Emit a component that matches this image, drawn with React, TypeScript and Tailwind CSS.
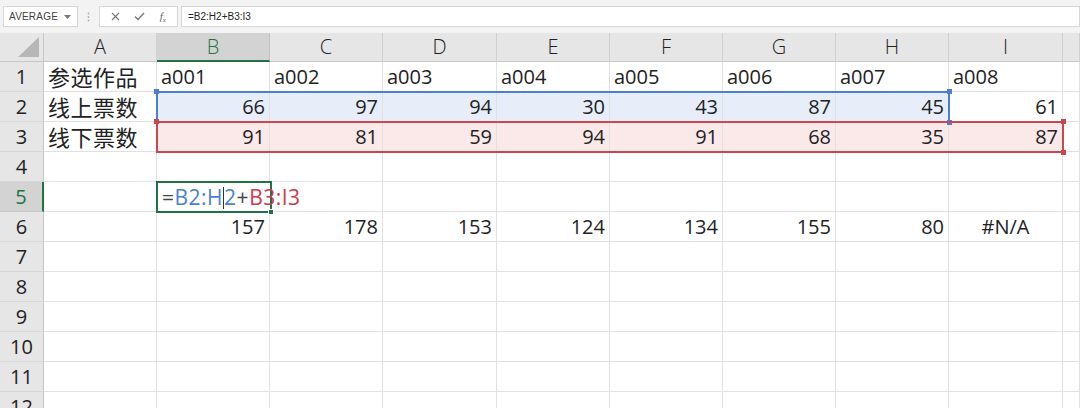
import React from 'react';

const cols = ['A', 'B', 'C', 'D', 'E', 'F', 'G', 'H', 'I', ''];

const rows: { n: number; cells: (string | number)[] }[] = [
  { n: 1, cells: ['参选作品', 'a001', 'a002', 'a003', 'a004', 'a005', 'a006', 'a007', 'a008'] },
  { n: 2, cells: ['线上票数', 66, 97, 94, 30, 43, 87, 45, 61] },
  { n: 3, cells: ['线下票数', 91, 81, 59, 94, 91, 68, 35, 87] },
  { n: 4, cells: [] },
  { n: 5, cells: [] },
  { n: 6, cells: ['', 157, 178, 153, 124, 134, 155, 80, '#N/A'] },
  { n: 7, cells: [] },
  { n: 8, cells: [] },
  { n: 9, cells: [] },
  { n: 10, cells: [] },
  { n: 11, cells: [] },
  { n: 12, cells: [] },
];

const font = { fontFamily: '"Open Sans", "Noto Sans CJK SC", sans-serif' };

const cellBg = (r: number, c: number) => {
  if (r === 2 && c >= 1 && c <= 7) return 'bg-[#e7eef9]';
  if (r === 3 && c >= 1 && c <= 8) return 'bg-[#fbe8e9]';
  return 'bg-white';
};

const Handle = ({ className }: { className: string }) => (
  <div className={`absolute w-[5px] h-[5px] ${className}`} />
);

const App = () => {
  return (
    <div className="w-[1080px] h-[408px] overflow-hidden bg-white text-[#222]" style={font}>
      {/* Formula bar */}
      <div className="h-[33px] bg-[#f3f3f3] flex items-start pt-[6px] pl-[3px]">
        <div className="w-[75px] h-[21px] bg-white border border-[#d6d6d6] flex items-center justify-between pl-[5px] pr-[6px]">
          <span className="text-[10px] text-[#444] tracking-[0.2px]" style={{ fontFamily: '"Liberation Sans", sans-serif' }}>AVERAGE</span>
          <svg width="7" height="4" viewBox="0 0 7 4"><path d="M0 0h7L3.5 4z" fill="#777" /></svg>
        </div>
        <div className="w-[21px] h-[21px] flex items-center justify-center">
          <svg width="3" height="10" viewBox="0 0 3 10">
            <circle cx="1.5" cy="1.5" r="0.9" fill="#b0b0b0" />
            <circle cx="1.5" cy="5" r="0.9" fill="#b0b0b0" />
            <circle cx="1.5" cy="8.5" r="0.9" fill="#b0b0b0" />
          </svg>
        </div>
        <div className="w-[79px] h-[21px] bg-white border border-[#d6d6d6] flex items-center justify-around px-[4px]">
          <svg width="9" height="9" viewBox="0 0 9 9"><path d="M1 1l7 7M8 1L1 8" stroke="#777" strokeWidth="1.1" /></svg>
          <svg width="11" height="9" viewBox="0 0 11 9"><path d="M1 4.5l3 3L10 1" stroke="#777" strokeWidth="1.3" fill="none" /></svg>
          <span className="text-[11px] italic text-[#666]" style={{ fontFamily: '"Liberation Serif", serif' }}>
            f<sub className="text-[7px]">x</sub>
          </span>
        </div>
        <div className="ml-[3px] flex-1 h-[21px] bg-white border border-[#d6d6d6] flex items-center pl-[6px]">
          <span className="text-[10px] text-[#222]" style={{ fontFamily: '"Liberation Sans", sans-serif' }}>=B2:H2+B3:I3</span>
        </div>
      </div>

      {/* Sheet */}
      <div className="relative">
        <div className="grid grid-cols-[44px_113px_113px_113px_114px_113px_113px_113px_113px_114px_1fr] auto-rows-[30px] grid-rows-[29px]">
          {/* corner */}
          <div className="relative bg-[#e6e6e6] border-r border-b border-[#c6c6c6]">
            <svg className="absolute right-[4px] bottom-[4px]" width="21" height="20" viewBox="0 0 21 20">
              <path d="M21 0V20H0z" fill="#b7b7b7" />
            </svg>
          </div>
          {cols.map((c, i) => (
            <div
              key={'h' + i}
              className={`flex items-center justify-center text-[20px] font-light border-r ${
                c === 'B'
                  ? 'bg-[#d3d3d3] text-[#217346] border-b-2 border-b-[#217346] border-r-[#c0c0c0]'
                  : 'bg-[#e6e6e6] border-b border-[#c6c6c6] border-r-[#d0d0d0]'
              }`}
            >
              {c}
            </div>
          ))}

          {rows.map((row) => (
            <React.Fragment key={row.n}>
              <div
                className={`flex items-end justify-center pb-[1px] text-[20px] leading-[27px] border-b ${
                  row.n === 5
                    ? 'bg-[#d3d3d3] text-[#217346] border-r-2 border-r-[#217346] border-b-[#c6c6c6]'
                    : 'bg-[#e6e6e6] border-r border-r-[#c6c6c6] border-b-[#d6d6d6]'
                }`}
              >
                {row.n}
              </div>
              {cols.map((_, ci) => {
                const v = row.cells[ci];
                const isNum = typeof v === 'number';
                const isCjk = ci === 0 && typeof v === 'string' && v !== '';
                const align = isNum ? 'justify-end pr-[4px]' : v === '#N/A' ? 'justify-center' : 'justify-start pl-[4px]';
                return (
                  <div
                    key={ci}
                    className={`flex items-end pb-[1px] whitespace-nowrap border-r border-b border-[#e1e1e1] leading-[27px] ${cellBg(row.n, ci)} ${align} ${
                      isCjk ? 'text-[22px] tracking-[0.5px]' : 'text-[20px]'
                    }`}
                    style={isCjk ? { fontFamily: '"Noto Sans CJK SC", sans-serif' } : undefined}
                  >
                    {v ?? ''}
                  </div>
                );
              })}
            </React.Fragment>
          ))}
        </div>

        {/* B2:H2 range */}
        <div className="absolute left-[156px] top-[58px] w-[794px] h-[32px] border-2 border-[#4a7fd3]">
          <Handle className="-left-[4px] -top-[4px] bg-[#4a7fd3]" />
          <Handle className="-right-[4px] -top-[4px] bg-[#4a7fd3]" />
          <Handle className="-right-[4px] -bottom-[4px] bg-[#4a7fd3]" />
        </div>

        {/* B3:I3 range */}
        <div className="absolute left-[156px] top-[88px] w-[908px] h-[32px] border-2 border-[#c9474f]">
          <Handle className="-left-[4px] -top-[4px] bg-[#c9474f]" />
          <Handle className="-right-[4px] -top-[4px] bg-[#c9474f]" />
          <Handle className="-right-[4px] -bottom-[4px] bg-[#c9474f]" />
        </div>

        {/* B5 edit cell */}
        <div className="absolute left-[156px] top-[148px] w-[116px] h-[32px] border-2 border-[#217346] bg-white">
          <div className="absolute left-[4px] bottom-[0px] whitespace-nowrap text-[21px] leading-[27px] tracking-[0.5px] flex items-end">
            <span className="text-[#444]">=</span>
            <span className="text-[#4a7fd3]">B2:H</span>
            <span className="inline-block w-[1px] h-[22px] bg-[#333] mb-[2px]" />
            <span className="text-[#4a7fd3]">2</span>
            <span className="text-[#444]">+</span>
            <span className="text-[#d0394a]">B3:I3</span>
          </div>
          <Handle className="-right-[4px] -bottom-[4px] bg-[#217346] border border-white w-[6px] h-[6px]" />
        </div>
      </div>
    </div>
  );
};

export default App;
